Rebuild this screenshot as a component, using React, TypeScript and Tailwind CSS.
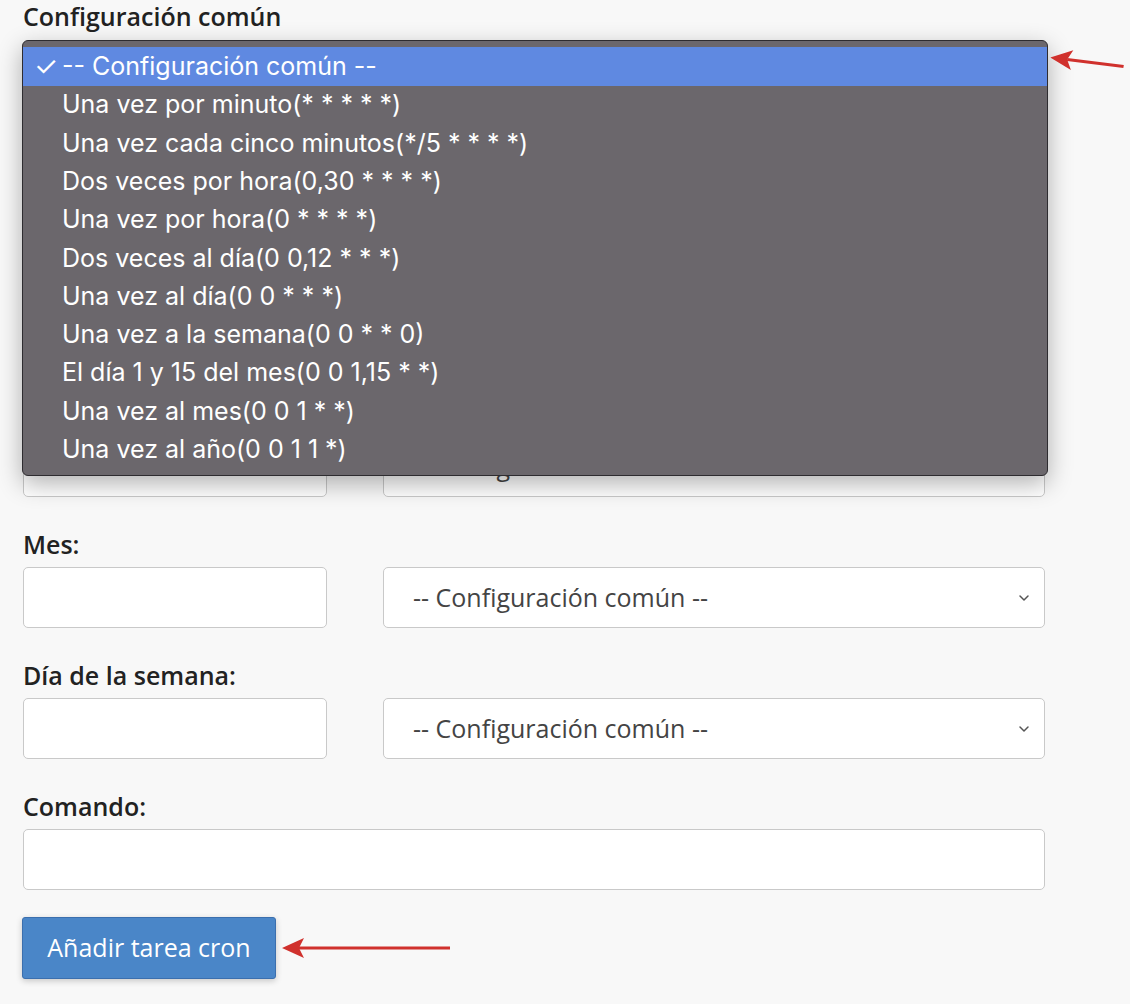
import React from 'react';

const options = [
  'Una vez por minuto(* * * * *)',
  'Una vez cada cinco minutos(*/5 * * * *)',
  'Dos veces por hora(0,30 * * * *)',
  'Una vez por hora(0 * * * *)',
  'Dos veces al día(0 0,12 * * *)',
  'Una vez al día(0 0 * * *)',
  'Una vez a la semana(0 0 * * 0)',
  'El día 1 y 15 del mes(0 0 1,15 * *)',
  'Una vez al mes(0 0 1 * *)',
  'Una vez al año(0 0 1 1 *)',
];

const Chevron = () => (
  <svg width="14" height="14" viewBox="0 0 14 14" className="text-[#555]">
    <path d="M3 5l4 4 4-4" fill="none" stroke="currentColor" strokeWidth="1.5" strokeLinecap="round" strokeLinejoin="round" />
  </svg>
);

const FakeSelect = () => (
  <div className="flex h-[61px] w-[662px] items-center justify-between rounded-[5px] border border-[#c9c9c9] bg-white pl-[29px] pr-[13px] text-[25px] text-[#444]">
    <span>-- Configuración común --</span>
    <Chevron />
  </div>
);

const Field = ({ label }: { label: string }) => (
  <div className="mb-[32px]">
    <div className="mb-[8px] h-[30px] text-[25px] font-semibold leading-[30px] text-[#222]">{label}</div>
    <div className="flex gap-[56px]">
      <div className="h-[61px] w-[304px] rounded-[5px] border border-[#c9c9c9] bg-white" />
      <FakeSelect />
    </div>
  </div>
);

const Arrow = ({ className, length }: { className: string; length: number }) => (
  <svg className={className} width={length} height="24" viewBox={`0 0 ${length} 24`}>
    <polygon points="0,12 22,2 17,12 22,22" fill="#d0312d" />
    <line x1="17" y1="12" x2={length} y2="12" stroke="#d0312d" strokeWidth="3" />
  </svg>
);

export default function App() {
  return (
    <div className="relative h-[1004px] w-[1130px] overflow-hidden bg-[#f8f8f8] pl-[23px]" style={{ fontFamily: '"Open Sans", sans-serif' }}>
      {/* Common settings */}
      <div className="mb-[32px] pt-[1px]">
        <div className="mb-[12px] h-[30px] text-[25px] font-semibold leading-[30px] text-[#222]">Configuración común</div>
        <div className="flex h-[61px] w-[1022px] items-center justify-between rounded-[5px] border border-[#c9c9c9] bg-white pl-[29px] pr-[13px] text-[25px] text-[#444]">
          <span>-- Configuración común --</span>
          <Chevron />
        </div>
      </div>
      <Field label="Minuto:" />
      <Field label="Hora:" />
      <Field label="Día:" />
      <Field label="Mes:" />
      <Field label="Día de la semana:" />

      <div className="mb-[27px]">
        <div className="mb-[8px] h-[30px] text-[25px] font-semibold leading-[30px] text-[#222]">Comando:</div>
        <div className="h-[61px] w-[1022px] rounded-[5px] border border-[#c9c9c9] bg-white" />
      </div>

      <div className="flex items-center">
        <button className="h-[62px] w-[254px] -ml-px rounded-[3px] border border-[#3b6fae] bg-[#4a86c8] text-[25px] text-white shadow-[0_2px_6px_rgba(0,0,0,0.2)]">
          Añadir tarea cron
        </button>
        <Arrow className="ml-[6px]" length={168} />
      </div>

      {/* Native dropdown popup */}
      <div
        className="absolute left-[22px] top-[40px] w-[1026px] rounded-[6px] border border-[#2e2c30] bg-[#6b676c] pt-[6px] pb-[6px] shadow-[0_8px_24px_rgba(0,0,0,0.3)]"
        style={{ fontFamily: 'Inter, "Liberation Sans", sans-serif' }}
      >
        <div className="flex h-[39px] items-center bg-[#5f89e1] text-[25px] text-white">
          <span className="w-[39px] pl-[11px] text-[27px] leading-none">✓</span>
          <span>-- Configuración común --</span>
        </div>
        {options.map((o) => (
          <div key={o} className="flex h-[38.3px] items-center pl-[39px] text-[25px] text-white">
            {o}
          </div>
        ))}
      </div>

      <Arrow className="absolute left-[1050px] top-[50px] rotate-[7deg]" length={74} />
    </div>
  );
}
